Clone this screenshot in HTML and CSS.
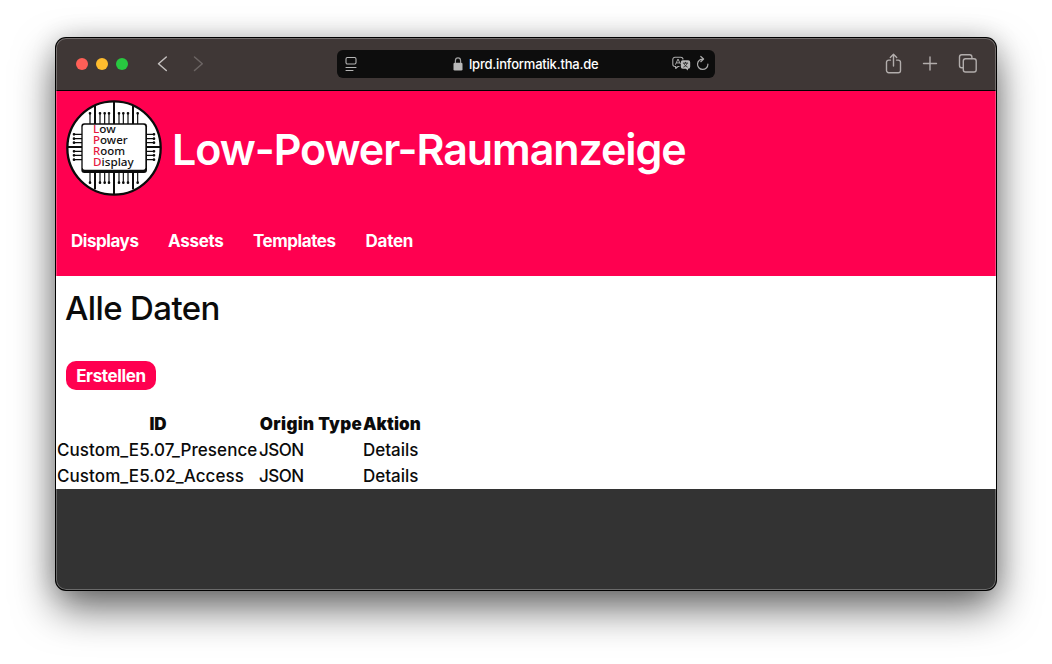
FILE: index.html
```html
<!DOCTYPE html>
<html lang="de">
<head>
<meta charset="utf-8">
<title>Low-Power-Raumanzeige</title>
<link rel="stylesheet" href="styles.css">
</head>
<body>
<div class="window">
  <div class="toolbar">
    <div class="lights"><i class="red"></i><i class="yellow"></i><i class="green"></i></div>
    <svg class="history" width="48" height="20" viewBox="0 0 48 20" fill="none" stroke-width="1.5" stroke-linecap="round" stroke-linejoin="round"><path d="M10.300 3 2.500 9.700l7.800 6.800" stroke="#c3bfbe"/><path d="m38.500 3 7.800 6.700-7.800 6.800" stroke="#6b6463"/></svg>
    <div class="address">
      <svg class="reader" width="12" height="16" viewBox="0 0 12 16" fill="none" stroke="#b5b5b5" stroke-width="1.1" stroke-linecap="round"><rect x="1" y="1.5" width="10" height="6.5" rx="1.4"/><path d="M1 11.500h10M1 14.500h7"/></svg>
      <div class="host"><svg width="10" height="14" viewBox="0 0 10 14"><rect x=".5" y="5.8" width="9" height="7.7" rx="1.3" fill="#b9b9b9"/><path d="M2.4 6V3.8a2.6 2.9 0 0 1 5.2 0V6" fill="none" stroke="#a0a0a0" stroke-width="1.2"/></svg><span>lprd.informatik.tha.de</span></div>
      <svg class="actions" width="40" height="18" viewBox="0 0 40 18" fill="none" stroke="#aaa" stroke-linejoin="round">
        <path d="M7.5 11.5H6l-2.3 2v-2H3A2.2 2.2 0 0 1 .8 9.3V4.4A2.2 2.2 0 0 1 3 2.2h5.8A2.2 2.2 0 0 1 11 4.4" stroke-width="1.1"/>
        <path d="M3.4 9.7 6 4l2.3 5M4.4 7.9h3" stroke-width="1"/>
        <path d="M10.8 5.2h5.4A2 2 0 0 1 18.2 7.200v4.600a2 2 0 0 1-2 2h-.3V15.400L13.800 13.800h-3a2 2 0 0 1-2-2V7.200a2 2 0 0 1 2-2Z" fill="#b8b8b8" stroke="none"/>
        <path d="M10.900 8.100h5.200M13.500 6.900v1.200M12 8.300c.5 1.900 1.800 3.100 3.600 3.800M15 8.300c-.5 1.900-1.800 3.100-3.600 3.800" stroke="#222" stroke-width=".9"/>
        <path d="M31.300 4.100A5.200 5.200 0 1 0 35.900 9.200M28.800 1.500l2.800 2.500-2.800 2.700" stroke-width="1.200" stroke-linecap="round"/>
      </svg>
    </div>
    <svg class="tools" width="94" height="24" viewBox="0 0 94 24" fill="none" stroke="#b2adac" stroke-width="1.400" stroke-linecap="round" stroke-linejoin="round">
      <path d="M6.500 8.100H4.700A2.200 2.200 0 0 0 2.500 10.300v8.200a2.200 2.200 0 0 0 2.200 2.200h9.600a2.200 2.200 0 0 0 2.200-2.200v-8.200a2.200 2.200 0 0 0-2.200-2.200H12.500M9.500 14V2.500M6.300 5.500 9.500 2.300l3.200 3.200"/>
      <path d="M39.500 11.500h13M46 5v13"/>
      <path d="M79 15.800h-1.300a2.200 2.200 0 0 1-2.200-2.200V5A2.200 2.200 0 0 1 77.700 2.800h8A2.200 2.200 0 0 1 87.900 5v1.600"/><rect x="79.300" y="6.800" width="12.900" height="13.200" rx="2.200"/>
    </svg>
  </div>
  <header class="banner">
    <div class="brand">
      <svg class="logo" width="96" height="96" viewBox="30 24 288 288">
        <circle cx="174" cy="168" r="140" fill="#fff" stroke="#0b0b0b" stroke-width="7"/>
        <path d="M174 28v280M117 42v250M231 42v250M34 165h280" stroke="#0b0b0b" stroke-width="6"/>
        <g stroke="#0b0b0b" stroke-width="3.500"><path d="M102 64v209M132 64v209M146 64v209M159 64v209M189 64v209M202 64v209M216 64v209M245 64v209M53 127h242M53 140h242M53 152h242M53 178h242M53 190h242M53 203h242"/></g>
        <g stroke="#0b0b0b" stroke-width="8" stroke-linecap="round"><path d="M102 64h0M132 64h0M146 64h0M159 64h0M189 64h0M202 64h0M216 64h0M245 64h0M102 272h0M132 272h0M146 272h0M159 272h0M189 272h0M202 272h0M216 272h0M245 272h0M54 127h0M54 140h0M54 152h0M54 178h0M54 190h0M54 203h0M294 127h0M294 140h0M294 152h0M294 178h0M294 190h0M294 203h0"/></g>
        <rect x="76" y="94" width="197" height="149" rx="9" fill="#0b0b0b"/><rect x="80" y="98" width="188" height="135" rx="6" fill="#fff"/>
        <g class="logo-text"><text x="111" y="124" textLength="68" lengthAdjust="spacingAndGlyphs"><tspan>L</tspan>ow</text><text x="111" y="156" textLength="104" lengthAdjust="spacingAndGlyphs"><tspan>P</tspan>ower</text><text x="111" y="188" textLength="96" lengthAdjust="spacingAndGlyphs"><tspan>R</tspan>oom</text><text x="111" y="221" textLength="122" lengthAdjust="spacingAndGlyphs"><tspan>D</tspan>isplay</text></g>
      </svg>
      <h1>Low-Power-Raumanzeige</h1>
    </div>
    <nav><a class="n1">Displays</a><a class="n2">Assets</a><a class="n3">Templates</a><a class="n4">Daten</a></nav>
  </header>
  <main>
    <h2>Alle Daten</h2>
    <button>Erstellen</button>
    <table>
      <colgroup><col class="c-id"><col class="c-origin"><col class="c-action"></colgroup>
      <thead><tr><th>ID</th><th class="origin">Origin Type</th><th class="action">Aktion</th></tr></thead>
      <tbody>
        <tr><td class="name">Custom_E5.07_Presence</td><td class="json">JSON</td><td>Details</td></tr>
        <tr><td class="name">Custom_E5.02_Access</td><td class="json">JSON</td><td>Details</td></tr>
      </tbody>
    </table>
  </main>
</div>
</body>
</html>
```
FILE: styles.css
```css
* { box-sizing: border-box; }
body { margin: 0; padding: 38px 56px; height: 664px; overflow: hidden; background: #fff; font-family: Inter, "Liberation Sans", sans-serif; }
.window { position: relative; height: 552px; border-radius: 10px; background: #333; overflow: hidden; box-shadow: 0 0 0 1px #000, 0 18px 42px rgba(0,0,0,.6), 0 0 26px rgba(0,0,0,.16); }
/* thin highlight along the window edge */
.window::after { content: ""; position: absolute; inset: 0; border-radius: 10px; box-shadow: inset 0 0 0 1px rgba(255,255,255,.27); pointer-events: none; }
.toolbar { height: 53px; background: #3f3736; border-bottom: 1px solid #000; display: flex; align-items: center; padding: 0 18px 1px 20px; }
.lights { display: flex; gap: 8px; width: 80px; }
.lights i { width: 12px; height: 12px; border-radius: 50%; }
.red { background: #ff5f57; }
.yellow { background: #febc2e; }
.green { background: #28c840; }
.address { width: 378px; height: 28px; margin-left: 133px; background: #0d0d0d; border-radius: 6px; display: flex; align-items: center; padding: 0 3px 0 8px; }
.host { margin-left: 96px; display: flex; align-items: center; gap: 6px; color: #fff; font-size: 13px; font-weight: 500; letter-spacing: -.2px; white-space: nowrap; width: 219px; }
.actions { flex: none; margin-left: auto; }
.tools { margin-left: auto; }
.banner { height: 185px; background: #ff0050; color: #fff; padding: 9px 10px; }
.brand { display: flex; align-items: center; gap: 10px; height: 96px; }
.logo-text { font: 500 30px "Noto Sans", sans-serif; fill: #111; }
.logo-text tspan { fill: #e5173f; }
h1 { margin: 1px 0 0; font-size: 43px; line-height: 52px; font-weight: 600; letter-spacing: -1.08px; white-space: nowrap; }
nav { display: flex; margin: 34px 0 0 5px; font-size: 17px; line-height: 22px; font-weight: 650; letter-spacing: -.45px; }
.n1 { width: 97px; }
.n2 { width: 85px; letter-spacing: -.3px; }
.n3 { width: 112.500px; }
.n4 { letter-spacing: -.25px; }
main { height: 213px; background: #fff; color: #0b0b0b; padding-top: 12px; }
h2 { margin: 0 0 0 9px; font-size: 33px; line-height: 40px; font-weight: 540; letter-spacing: -.62px; }
button { display: block; margin: 33px 0 21px 10px; width: 90px; height: 29px; padding: 2px 0 0; border: 0; border-radius: 10px; background: #ff0050; color: #fff; font: 650 17px/27px Inter, sans-serif; letter-spacing: -.35px; }
table { margin-left: 1px; width: 366px; table-layout: fixed; border-collapse: collapse; font-size: 17px; font-weight: 500; line-height: 26px; white-space: nowrap; }
.c-id { width: 202px; }
.c-origin { width: 104px; }
.c-action { width: 60px; }
td, th { padding: 0; height: 26px; }
th { font-weight: 900; }
.origin { letter-spacing: .32px; }
.action { letter-spacing: .1px; text-align: left; }
.name { letter-spacing: .08px; }
.json { letter-spacing: -.5px; }
```
